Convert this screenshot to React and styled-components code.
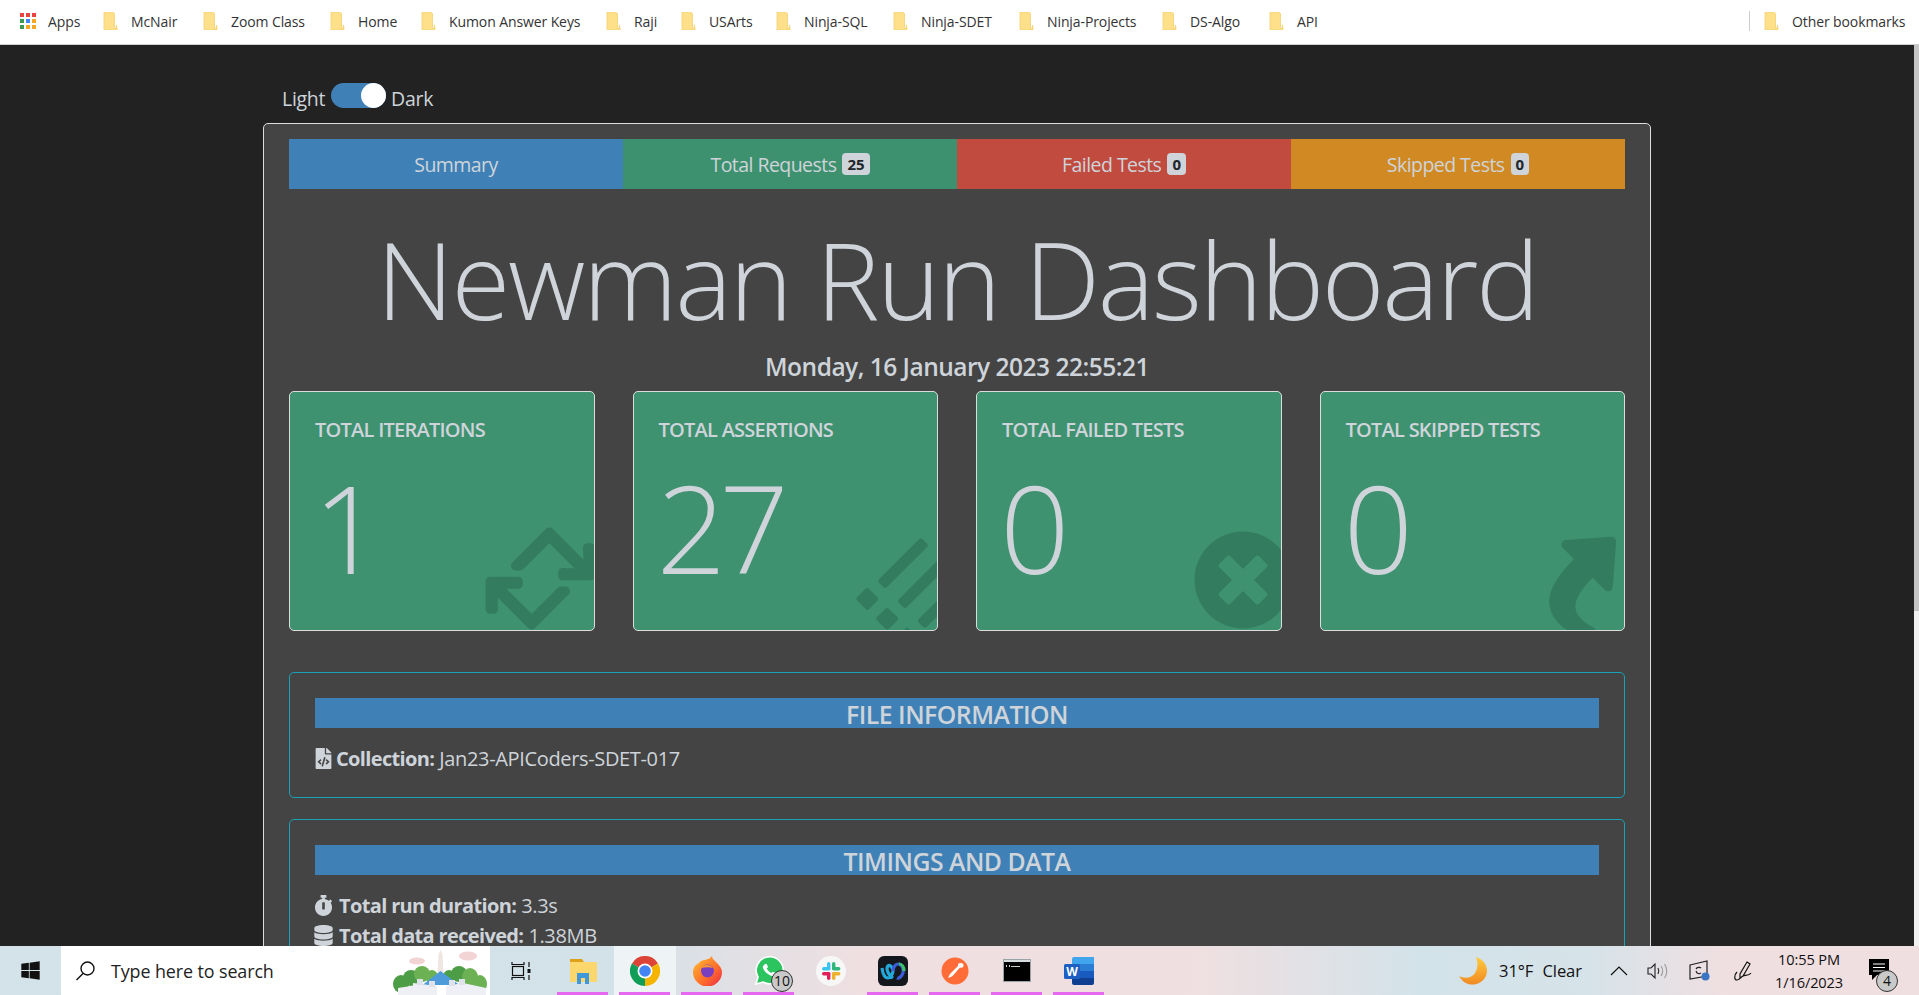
import React from "react";
import styled, { createGlobalStyle } from "styled-components";
import {
  FaRetweet,
  FaList,
  FaTimesCircle,
  FaShare,
  FaFileCode,
  FaStopwatch,
  FaDatabase,
  FaWindows,
} from "react-icons/fa";

const TEXT = "#ced4da";
const BLUE = "#3f81b6";
const GREEN = "#3e9270";
const FONT = `"Open Sans", "Noto Sans", sans-serif`;

const Global = createGlobalStyle`
  * { box-sizing: border-box; }
  html, body { margin: 0; height: 100%; overflow: hidden; }
  body { font-family: ${FONT}; background: #222; }
`;

// ********************** BROWSER CHROME ***************************************
const Screen = styled.div`
  height: 995px;
  display: flex;
  flex-direction: column;
`;

const BookmarkBar = styled.div`
  height: 45px;
  flex: none;
  background: #fff;
  border-bottom: 1px solid #cfcfcf;
  display: flex;
  align-items: center;
  padding: 0 11px 2px 20px;
  font-size: 14px;
  letter-spacing: -0.1px;
  color: #333;
`;

const Bookmark = styled.div`
  display: flex;
  align-items: center;
  gap: 13px;
  width: ${(p) => p.$w}px;
  flex: none;
  white-space: nowrap;
`;

const AppsLabel = styled.span`
  margin-left: -1px;
`;

const BarSpacer = styled.div`
  flex: 1;
`;

const BarDivider = styled.div`
  width: 1px;
  height: 20px;
  background: #ccc;
  margin-right: 14px;
`;

const MiddleRow = styled.div`
  flex: 1;
  min-height: 0;
  display: flex;
`;

const Viewport = styled.div`
  flex: 1;
  min-width: 0;
  overflow: hidden;
  background: #222;
`;

const ScrollTrack = styled.div`
  width: 5px;
  flex: none;
  background: #f1f1f1;
`;

const ScrollThumb = styled.div`
  height: 566px;
  background: #c4c4c4;
`;

// ********************** REPORT ***************************************
const Container = styled.div`
  width: 1388px;
  margin: 0 auto;
`;

const ToggleRow = styled.div`
  height: 78px;
  padding: 40px 0 0 19px;
  display: flex;
  align-items: flex-start;
  font-size: 19.5px;
  line-height: 27px;
  letter-spacing: -0.3px;
  color: ${TEXT};
`;

const ToggleTrack = styled.div`
  width: 55px;
  height: 25px;
  margin: -2px 5px 0 6px;
  border-radius: 13px;
  background: ${BLUE};
  display: flex;
  justify-content: flex-end;
`;

const ToggleKnob = styled.div`
  width: 25px;
  height: 25px;
  border-radius: 50%;
  background: #fff;
`;

const Panel = styled.div`
  background: #444;
  border: 1px solid #ddd;
  border-radius: 5px;
  padding: 15px 25px 40px 25px;
`;

const Tabs = styled.div`
  display: grid;
  grid-template-columns: repeat(4, 1fr);
`;

const Tab = styled.div`
  height: 50px;
  background: ${(p) => p.$bg};
  color: ${TEXT};
  font-size: 19.5px;
  letter-spacing: -0.55px;
  display: flex;
  align-items: center;
  justify-content: center;
  gap: 6px;
`;

const Badge = styled.span`
  background: ${TEXT};
  color: #212529;
  font-size: 15px;
  font-weight: 700;
  line-height: 22px;
  padding: 0 5px;
  border-radius: 4px;
  letter-spacing: 0;
`;

const Title = styled.h1`
  margin: 0;
  height: 156px;
  padding-top: 16px;
  line-height: 148px;
  font-size: 107px;
  font-weight: 300;
  letter-spacing: -2.3px;
  white-space: nowrap;
  text-align: center;
  color: ${TEXT};
`;

const RunDate = styled.div`
  height: 46px;
  padding-top: 7px;
  line-height: 30px;
  text-align: center;
  font-size: 24.5px;
  font-weight: 600;
  letter-spacing: -0.5px;
  color: ${TEXT};
`;

const Cards = styled.div`
  display: grid;
  grid-template-columns: repeat(4, 1fr);
  gap: 38px;
  margin-bottom: 41px;
`;

const Card = styled.div`
  position: relative;
  height: 240px;
  overflow: hidden;
  background: ${GREEN};
  border: 1px solid #ddd;
  border-radius: 5px;
  padding: 24px 25px 0 25px;
  color: ${TEXT};
`;

const CardTitle = styled.div`
  font-size: 20px;
  font-weight: 600;
  line-height: 27px;
  letter-spacing: -0.75px;
  text-transform: uppercase;
`;

const CardNumber = styled.div`
  font-size: 122px;
  font-weight: 300;
  line-height: 120px;
  letter-spacing: -7px;
  margin-top: 24px;
  margin-left: -2px;
`;

const CardIcon = styled.div`
  position: absolute;
  right: ${(p) => p.$right}px;
  bottom: ${(p) => p.$bottom}px;
  font-size: ${(p) => p.$size}px;
  line-height: 0;
  color: rgba(0, 0, 0, 0.15);
  transform: rotate(${(p) => p.$rotate}deg);
`;

const Section = styled.div`
  border: 1px solid #17a2b8;
  border-radius: 5px;
  padding: 25px 25px 24px;
  margin-bottom: 21px;
`;

const SectionBar = styled.div`
  height: 30px;
  line-height: 33px;
  background: ${BLUE};
  color: ${TEXT};
  text-align: center;
  font-size: 24.8px;
  font-weight: 600;
  letter-spacing: -0.5px;
  text-transform: uppercase;
  margin-bottom: 15px;
`;

const InfoRow = styled.div`
  height: 30px;
  display: flex;
  align-items: center;
  gap: ${(p) => p.$gap}px;
  font-size: 20px;
  letter-spacing: -0.35px;
  color: ${TEXT};
  svg {
    font-size: 21px;
    margin-left: -2px;
    flex: none;
  }
  b {
    font-weight: 700;
    letter-spacing: -0.65px;
    margin-right: 5px;
  }
`;

// ********************** TASKBAR ***************************************
const Taskbar = styled.div`
  height: 49px;
  flex: none;
  display: flex;
  align-items: stretch;
  background: linear-gradient(
    90deg,
    #d4e2e9 0%,
    #d3e1e8 32%,
    #efdfe1 45%,
    #f0dfe0 62%,
    #d3e3ea 74%,
    #d6e3e9 83%,
    #f0dfe1 90%,
    #f0dfe0 100%
  );
  color: #111;
`;

const StartButton = styled.div`
  width: 61px;
  flex: none;
  display: flex;
  align-items: center;
  padding-left: 20px;
  font-size: 21px;
`;

const SearchBox = styled.div`
  width: 429px;
  flex: none;
  background: #fff;
  display: flex;
  align-items: center;
  padding-left: 13px;
  gap: 15px;
  font-size: 17.9px;
  letter-spacing: -0.1px;
  color: #222;
`;

const SearchArt = styled.div`
  margin-left: auto;
  align-self: flex-end;
  line-height: 0;
  margin-right: 2px;
`;

const TaskItem = styled.div`
  position: relative;
  width: 62px;
  flex: none;
  display: flex;
  align-items: center;
  justify-content: center;
  background: ${(p) => (p.$active ? "#eef3f6" : "transparent")};
  &::after {
    content: "";
    display: ${(p) => (p.$open ? "block" : "none")};
    position: absolute;
    bottom: 0;
    left: 5px;
    right: 6px;
    height: 3px;
    background: #e667f0;
  }
`;

const CountBubble = styled.span`
  position: absolute;
  right: ${(p) => p.$right}px;
  bottom: ${(p) => p.$bottom}px;
  width: 22px;
  height: 22px;
  border-radius: 50%;
  border: 1px solid #333;
  background: #c9c9c9;
  color: #111;
  font-size: 14px;
  line-height: 20px;
  text-align: center;
`;

const Tray = styled.div`
  margin-left: auto;
  padding-right: 14px;
  display: flex;
  align-items: center;
  font-size: 16.6px;
`;

const TrayIcon = styled.div`
  width: ${(p) => p.$w}px;
  flex: none;
  display: flex;
  justify-content: center;
  align-items: center;
  position: relative;
`;

const Weather = styled.div`
  width: 96px;
  flex: none;
  word-spacing: 5px;
  white-space: nowrap;
  letter-spacing: -0.1px;
`;

const Clock = styled.div`
  width: 92px;
  flex: none;
  text-align: center;
  font-size: 14.6px;
  line-height: 23px;
  letter-spacing: -0.1px;
`;

// ********************** ICONS ***************************************
const FolderIcon = () => (
  <svg width="15" height="18" viewBox="0 0 15 18">
    <path d="M1 0h8.5l2 1.5v15H13l.5-3.5 .5 4v1H1z" fill="#ffe08a" stroke="#f3cf70" strokeWidth=".8" />
  </svg>
);

const AppsIcon = () => {
  const colors = ["#e8453c", "#e8453c", "#e8453c", "#3d9a50", "#4285f4", "#f5a623", "#3d9a50", "#f5a623", "#f5a623"];
  return (
    <svg width="16" height="16" viewBox="0 0 16 16">
      {colors.map((c, i) => (
        <rect key={i} x={(i % 3) * 6} y={Math.floor(i / 3) * 6} width="4" height="4" fill={c} />
      ))}
    </svg>
  );
};

const SearchGlass = () => (
  <svg width="22" height="22" viewBox="0 0 22 22" fill="none" stroke="#111" strokeWidth="1.4">
    <circle cx="13.5" cy="8.5" r="6.5" />
    <path d="M9 13.5L2.5 20" />
  </svg>
);

const CityArt = () => (
  <svg width="95" height="49" viewBox="0 0 95 49">
    <ellipse cx="24" cy="15" rx="8" ry="3.5" fill="#f2d4d5" />
    <ellipse cx="75" cy="10" rx="9" ry="4.5" fill="#f2d4d5" />
    {[
      [8, 38, 8, 9],
      [18, 32, 8, 8],
      [29, 28, 8, 8],
      [39, 31, 6, 7],
      [56, 31, 6, 7],
      [66, 28, 8, 8],
      [77, 31, 8, 9],
      [87, 38, 7, 9],
    ].map(([cx, cy, rx, ry]) => (
      <ellipse key={cx} cx={cx} cy={cy} rx={rx} ry={ry} fill={cx % 2 ? "#6cb254" : "#4c9d46"} />
    ))}
    <path d="M45.500 8l2-4 2 4 1.500 28h-7z" fill="#efe6e2" />
    <path d="M47.500 25l-18 14h37z" fill="#4d9bd8" />
    <path d="M5 42l19-3v10H5zM20 37l24 3v9H20zM53 40l17-3v12H53zM70 37l23 5v7H70z" fill="#eef0f5" />
    <path d="M24 33h6v6h-6zM36 35h6v6h-6zM56 34h6v6h-6zM66 33h6v6h-6z" fill="#dfe2ea" />
  </svg>
);

const TaskViewIcon = () => (
  <svg width="20" height="20" viewBox="0 0 20 20" fill="none" stroke="#111" strokeWidth="1.2">
    <path d="M1 1v2.5h12V1M1 19v-2.5h12V19" />
    <rect x="1.5" y="5.5" width="11" height="9" />
    <path d="M18 1v5M18 14v5" />
    <rect x="16.5" y="8" width="3" height="4" fill="#111" stroke="none" />
  </svg>
);

const ExplorerIcon = () => (
  <svg width="28" height="28" viewBox="0 0 28 28">
    <path d="M1 2h12l2 3h-14z" fill="#dda21a" />
    <rect x="1" y="5" width="27" height="20" rx="1" fill="#fcd76d" />
    <path d="M8 27V16h12v11h-4v-6h-4v6z" fill="#3f98dc" />
  </svg>
);

const ChromeIcon = () => (
  <svg width="30" height="30" viewBox="0 0 30 30">
    <path d="M15 15L2 7.5A15 15 0 0 1 28 7.5z" fill="#db4437" />
    <path d="M15 15L2 7.5A15 15 0 0 0 15 30z" fill="#0f9d58" />
    <path d="M15 15L28 7.5A15 15 0 0 1 15 30z" fill="#f4b400" />
    <circle cx="15" cy="15" r="7.5" fill="#fff" />
    <circle cx="15" cy="15" r="5.8" fill="#4285f4" />
  </svg>
);

const FirefoxIcon = () => (
  <svg width="29" height="30" viewBox="0 0 29 30">
    <defs>
      <linearGradient id="ff" x1="0" y1="0" x2="1" y2="1">
        <stop offset="0" stopColor="#ffc02e" />
        <stop offset=".6" stopColor="#ff6b2c" />
        <stop offset="1" stopColor="#e8274b" />
      </linearGradient>
    </defs>
    <path d="M3 9l3-2c1-2 4-3 6-3 3-1 6-2 7-4 0 3 2 4 5 7 3 3 5 6 5 9a14 14 0 0 1-29 0c0-3 1-5 3-7z" fill="url(#ff)" />
    <circle cx="14.5" cy="15" r="6.5" fill="#7a3fc0" />
    <path d="M8 12c3-4 9-4 12 0-3-1-8-1-12 0z" fill="#ff9a2e" />
  </svg>
);

const WhatsappIcon = () => (
  <svg width="30" height="30" viewBox="0 0 30 30">
    <path d="M2 28l2-7A13.500 13.500 0 1 1 9 26z" fill="#2bc45f" stroke="#fff" strokeWidth="1.6" />
    <path d="M10.500 8.500c1-1 2-1 2.500 0l1 2.500-1.200 1.600c1 2 2.400 3.400 4.400 4.400l1.600-1.200 2.500 1c1 .5 1 1.500 0 2.500-1.500 1.500-4 1-7-1s-5-4.500-5.500-7c-.2-1 .7-2 1.700-2.800z" fill="#fff" />
  </svg>
);

const SlackIcon = () => (
  <svg width="30" height="30" viewBox="0 0 30 30">
    <circle cx="15" cy="15" r="15" fill="#f7f7f7" />
    <rect x="11" y="6" width="3.4" height="8" rx="1.7" fill="#36c5f0" />
    <rect x="6" y="11" width="8.4" height="3.4" rx="1.7" fill="#36c5f0" />
    <rect x="16" y="6" width="3.4" height="8" rx="1.7" fill="#2eb67d" />
    <rect x="16" y="11" width="8.4" height="3.4" rx="1.7" fill="#2eb67d" />
    <rect x="16" y="16" width="8.4" height="3.4" rx="1.7" fill="#ecb22e" />
    <rect x="16" y="16" width="3.4" height="8" rx="1.7" fill="#ecb22e" />
    <rect x="6" y="16" width="8.4" height="3.4" rx="1.7" fill="#e01e5a" />
    <rect x="11" y="16" width="3.4" height="8" rx="1.7" fill="#e01e5a" />
  </svg>
);

const WebexIcon = () => (
  <svg width="30" height="30" viewBox="0 0 30 30" fill="none">
    <rect width="30" height="30" rx="6" fill="#14181c" />
    <path d="M4 12c1 8 4 10 6 10s5-4 5-7-3-7-5-5-1 8 5 12" stroke="#22a7d8" strokeWidth="3.2" />
    <path d="M15 15c0-3 2-7 5-7 4 0 6 5 5 9-1 3-4 6-6 5" stroke="#3c5bd8" strokeWidth="3.2" />
    <path d="M21 8c3 0 5 3 5 7" stroke="#3cc06a" strokeWidth="3.2" />
  </svg>
);

const PostmanIcon = () => (
  <svg width="28" height="28" viewBox="0 0 28 28">
    <circle cx="14" cy="14" r="13.5" fill="#ff6c37" />
    <path d="M20 6a2.4 2.4 0 1 1-1 4.5l-7 8-2 1.5-3 1 2-4 8-8a2.4 2.4 0 0 1 3-3z" fill="#fff" />
  </svg>
);

const TerminalIcon = () => (
  <svg width="28" height="23" viewBox="0 0 28 23">
    <rect width="28" height="23" fill="#9aa3a8" />
    <rect x="1" y="3" width="26" height="19" fill="#000" />
    <rect x="1" y="1" width="26" height="2" fill="#d8dde0" />
    <path d="M3 6h1v2H3zM6 6h1v2H6zM8 7h9v1H8z" fill="#ccc" />
  </svg>
);

const WordIcon = () => (
  <svg width="30" height="28" viewBox="0 0 30 28">
    <path d="M8 2a2 2 0 0 1 2-2h20v7H8z" fill="#41a5ee" />
    <rect x="8" y="7" width="22" height="7" fill="#2b7cd3" />
    <rect x="8" y="14" width="22" height="7" fill="#185abd" />
    <path d="M8 21h22v5a2 2 0 0 1-2 2H10a2 2 0 0 1-2-2z" fill="#103f91" />
    <rect x="0" y="7" width="16" height="15" rx="1.5" fill="#1d5fc2" />
    <text x="8" y="19" textAnchor="middle" fontSize="12" fontWeight="700" fill="#fff" fontFamily="Open Sans, sans-serif">W</text>
  </svg>
);

const MoonIcon = () => (
  <svg width="28" height="28" viewBox="0 0 28 28">
    <defs>
      <linearGradient id="moon" x1="0" y1="0" x2="0" y2="1">
        <stop offset="0" stopColor="#ffcb3d" />
        <stop offset="1" stopColor="#f08a24" />
      </linearGradient>
    </defs>
    <path d="M17 0c9 3 13 11 10 19-3 7-13 11-20 7-3-1-5-4-7-7 6 3 13 2 16-3 3-5 3-11 1-16z" fill="url(#moon)" />
  </svg>
);

const ChevronIcon = () => (
  <svg width="18" height="11" viewBox="0 0 18 11" fill="none" stroke="#111" strokeWidth="1.2">
    <path d="M1 10l8-8 8 8" />
  </svg>
);

const SpeakerIcon = () => (
  <svg width="22" height="18" viewBox="0 0 22 18" fill="none" stroke="#222" strokeWidth="1.1">
    <path d="M1 6h3l4-4v14l-4-4H1z" />
    <path d="M11 6c1 2 1 4 0 6" />
    <path d="M14 4c2 3 2 7 0 10M17.500 2c3 4 3 10 0 14" stroke="#999" />
  </svg>
);

const MeetIcon = () => (
  <svg width="22" height="22" viewBox="0 0 22 22" fill="none" stroke="#222" strokeWidth="1.2">
    <path d="M1 5l17-4v15l-17 3z" />
    <path d="M7 9c1-2 4-2 5-1M12 13c-2 1-4 1-5-2" />
    <circle cx="16.500" cy="16.500" r="4" fill="#3a76c4" stroke="none" />
  </svg>
);

const PenIcon = () => (
  <svg width="22" height="22" viewBox="0 0 22 22" fill="none" stroke="#111" strokeWidth="1.2">
    <path d="M14 2l3 2-7 12-3 2 0-4zM4 12c-3 3-3 8 0 8s4-3 6-4 6 0 8-3" />
  </svg>
);

const NotifyIcon = () => (
  <svg width="22" height="24" viewBox="0 0 22 24">
    <path d="M0 0h20v16h-12l-5 5v-5h-3z" fill="#000" />
    <path d="M4 5h12M4 8.500h12M4 12h12" stroke="#fff" strokeWidth="1.2" />
  </svg>
);

// ********************** DATA ***************************************
const bookmarks = [
  ["McNair", 100],
  ["Zoom Class", 127],
  ["Home", 91],
  ["Kumon Answer Keys", 185],
  ["Raji", 75],
  ["USArts", 95],
  ["Ninja-SQL", 117],
  ["Ninja-SDET", 126],
  ["Ninja-Projects", 143],
  ["DS-Algo", 107],
  ["API", 60],
];

const tabs = [
  { label: "Summary", bg: BLUE },
  { label: "Total Requests", bg: "#3e916f", count: 25 },
  { label: "Failed Tests", bg: "#c24b3f", count: 0 },
  { label: "Skipped Tests", bg: "#d08923", count: 0 },
];

const cards = [
  { title: "Total Iterations", value: 1, Icon: FaRetweet, right: -9, bottom: -11, size: 125, rotate: -45 },
  { title: "Total Assertions", value: 27, Icon: FaList, right: -21, bottom: -8, size: 90, rotate: -45 },
  { title: "Total Failed Tests", value: 0, Icon: FaTimesCircle, right: -12, bottom: 0, size: 100, rotate: 0 },
  { title: "Total Skipped Tests", value: 0, Icon: FaShare, right: -12, bottom: 0, size: 100, rotate: -45 },
];

const App = () => (
  <Screen>
    <Global />
    <BookmarkBar>
      <Bookmark $w={83}>
        <AppsIcon />
        <AppsLabel>Apps</AppsLabel>
      </Bookmark>
      {bookmarks.map(([name, w]) => (
        <Bookmark key={name} $w={w}>
          <FolderIcon />
          {name}
        </Bookmark>
      ))}
      <BarSpacer />
      <BarDivider />
      <Bookmark $w={144}>
        <FolderIcon />
        Other bookmarks
      </Bookmark>
    </BookmarkBar>

    <MiddleRow>
      <Viewport>
        <Container>
          <ToggleRow>
            Light
            <ToggleTrack>
              <ToggleKnob />
            </ToggleTrack>
            Dark
          </ToggleRow>
          <Panel>
            <Tabs>
              {tabs.map((t) => (
                <Tab key={t.label} $bg={t.bg}>
                  {t.label}
                  {t.count !== undefined && <Badge>{t.count}</Badge>}
                </Tab>
              ))}
            </Tabs>
            <Title>Newman Run Dashboard</Title>
            <RunDate>Monday, 16 January 2023 22:55:21</RunDate>
            <Cards>
              {cards.map(({ title, value, Icon, right, bottom, size, rotate }) => (
                <Card key={title}>
                  <CardTitle>{title}</CardTitle>
                  <CardNumber>{value}</CardNumber>
                  <CardIcon $right={right} $bottom={bottom} $size={size} $rotate={rotate}>
                    <Icon />
                  </CardIcon>
                </Card>
              ))}
            </Cards>
            <Section>
              <SectionBar>File Information</SectionBar>
              <InfoRow $gap={2}>
                <FaFileCode />
                <span>
                  <b>Collection:</b>Jan23-APICoders-SDET-017
                </span>
              </InfoRow>
            </Section>
            <Section>
              <SectionBar>Timings and Data</SectionBar>
              <InfoRow $gap={5}>
                <FaStopwatch />
                <span>
                  <b>Total run duration:</b>3.3s
                </span>
              </InfoRow>
              <InfoRow $gap={5}>
                <FaDatabase />
                <span>
                  <b>Total data received:</b>1.38MB
                </span>
              </InfoRow>
            </Section>
          </Panel>
        </Container>
      </Viewport>
      <ScrollTrack>
        <ScrollThumb />
      </ScrollTrack>
    </MiddleRow>

    <Taskbar>
      <StartButton>
        <FaWindows />
      </StartButton>
      <SearchBox>
        <SearchGlass />
        Type here to search
        <SearchArt>
          <CityArt />
        </SearchArt>
      </SearchBox>
      <TaskItem>
        <TaskViewIcon />
      </TaskItem>
      <TaskItem $open>
        <ExplorerIcon />
      </TaskItem>
      <TaskItem $open $active>
        <ChromeIcon />
      </TaskItem>
      <TaskItem $open>
        <FirefoxIcon />
      </TaskItem>
      <TaskItem $open>
        <WhatsappIcon />
        <CountBubble $right={7} $bottom={3}>10</CountBubble>
      </TaskItem>
      <TaskItem>
        <SlackIcon />
      </TaskItem>
      <TaskItem $open>
        <WebexIcon />
      </TaskItem>
      <TaskItem $open>
        <PostmanIcon />
      </TaskItem>
      <TaskItem $open>
        <TerminalIcon />
      </TaskItem>
      <TaskItem $open>
        <WordIcon />
      </TaskItem>
      <Tray>
        <TrayIcon $w={52}>
          <MoonIcon />
        </TrayIcon>
        <Weather>31°F Clear</Weather>
        <TrayIcon $w={47}>
          <ChevronIcon />
        </TrayIcon>
        <TrayIcon $w={32}>
          <SpeakerIcon />
        </TrayIcon>
        <TrayIcon $w={51}>
          <MeetIcon />
        </TrayIcon>
        <TrayIcon $w={38}>
          <PenIcon />
        </TrayIcon>
        <Clock>
          10:55 PM
          <br />
          1/16/2023
        </Clock>
        <TrayIcon $w={50}>
          <NotifyIcon />
          <CountBubble $right={7} $bottom={-9}>4</CountBubble>
        </TrayIcon>
      </Tray>
    </Taskbar>
  </Screen>
);

export default App;
